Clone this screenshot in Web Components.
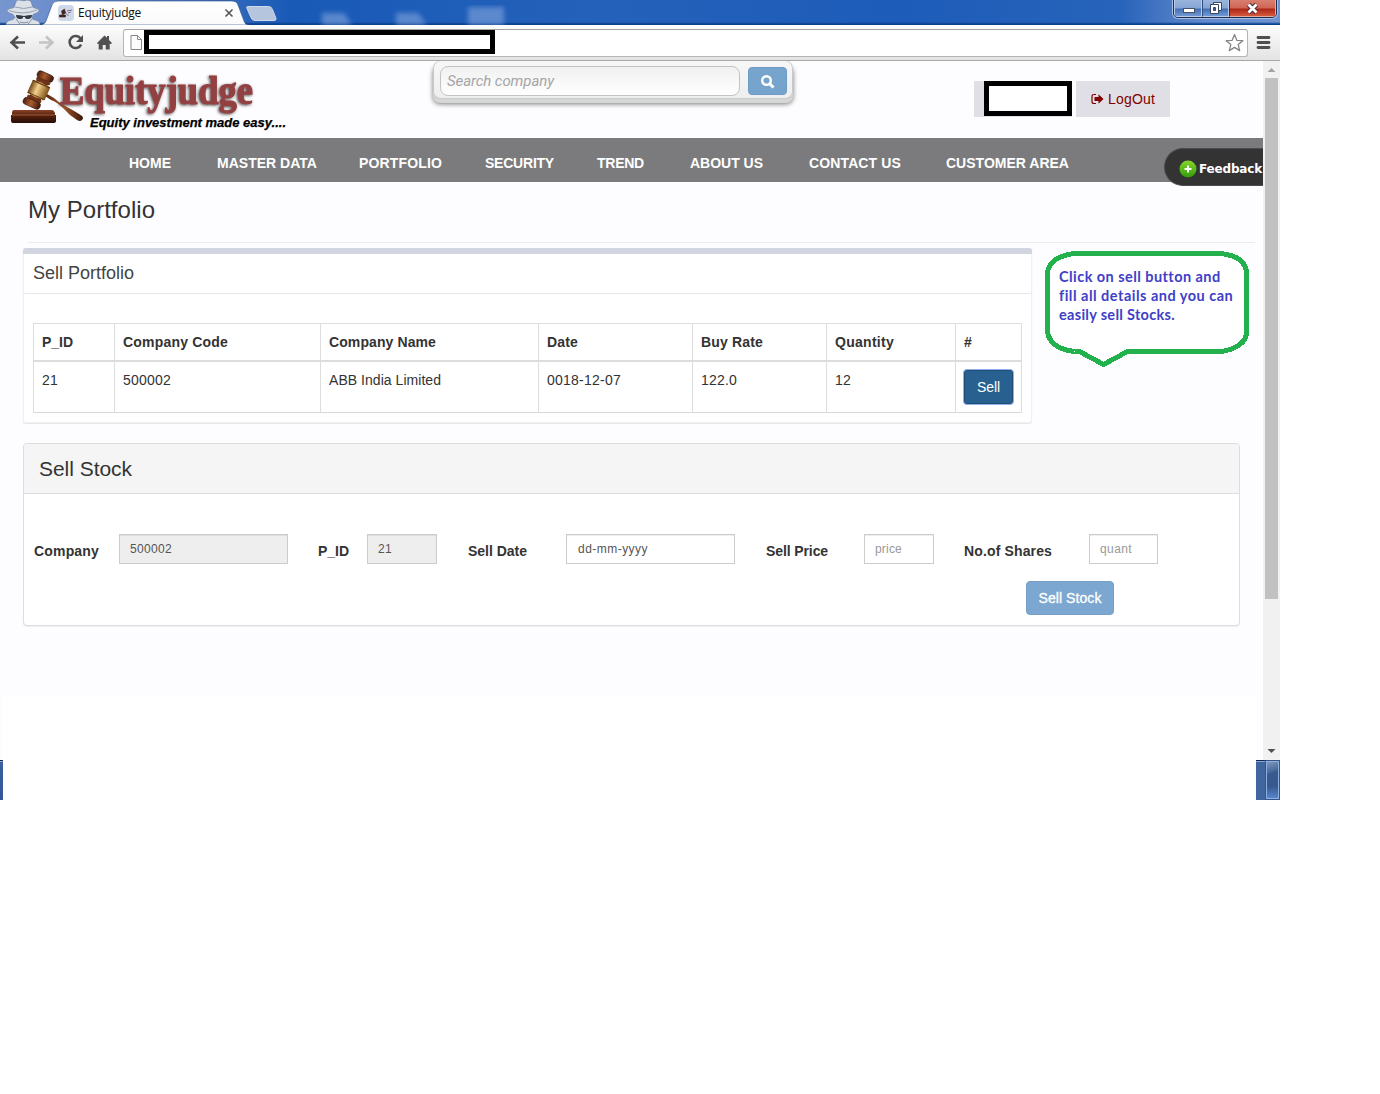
<!DOCTYPE html>
<html lang="en">
<head>
<meta charset="utf-8">
<title>Equityjudge</title>
<style>
html,body{margin:0;background:#fff}
body{font:14px/20px "Liberation Sans",Arial,sans-serif;color:#333}
</style>
</head>
<body>
<browser-window></browser-window>
<script>
const define=(name,html)=>customElements.define(name,class extends HTMLElement{
  connectedCallback(){
    if(this.shadowRoot)return;
    this.attachShadow({mode:'open'}).innerHTML='<style>*{box-sizing:border-box}:host{display:block;box-sizing:border-box}</style>'+(typeof html==='function'?html(this):html);
  }
});

/* Single-line text tracked out (or in) to the given width. */
customElements.define('fit-text',class extends HTMLElement{
  connectedCallback(){
    if(this.shadowRoot)return;
    const w=+this.getAttribute('w');
    this.attachShadow({mode:'open'}).innerHTML=`<style>:host{display:block;flex:none;white-space:nowrap;width:${w}px}span{display:inline-block}</style><span><slot></slot></span>`;
    queueMicrotask(()=>{
      const s=this.shadowRoot.querySelector('span');
      const n=this.textContent.length;
      s.style.letterSpacing=((w-s.getBoundingClientRect().width)/n).toFixed(3)+'px';
    });
  }
});

define('title-bar',`<style>
:host{height:25px;position:relative;overflow:hidden;background:linear-gradient(180deg,transparent 22px,#0c4190 24px,#0c4190),linear-gradient(90deg,#7796d0 0,#6f90cd 40px,#2e66bb 240px,#195ab7 290px,#2461ba 600px,#1d5cb9 900px,#2763ba 1120px,#6088cb 1200px,#6e93d0 1280px)}
svg{display:block}
.tabtext{position:absolute;left:78px;top:4px;font:12px/18px "Open Sans",sans-serif;color:#111}
.win{position:absolute;left:1173px;top:-4px;width:104px;height:22px;display:flex;border:1px solid #1d2e52;border-radius:0 0 5px 5px;overflow:hidden;box-shadow:0 0 0 1px #a9bfe4}
.win div{border:1px solid #b8cbe8;border-top:0;background:linear-gradient(#a2bbdf 0,#86a5d5 11px,#426eb3 12px,#7099d4);display:flex;align-items:center;justify-content:center;padding:3px 0 0 1px}
.win .a{width:28px}.win .b{width:27px;border-left-color:#2f4d80}.win .c{flex:1;background:linear-gradient(#dc8a7c 0,#cf6554 11px,#ad2615 12px,#d4593e);border-color:#e4a99f;border-left-color:#511e1b}
</style>
<svg width="1280" height="25" viewBox="0 0 1280 25">
<defs><filter id="b"><feGaussianBlur stdDeviation="2.400"/></filter><linearGradient id="t" x2="0" y2="1"><stop stop-color="#fff"/><stop offset="1" stop-color="#fafafa"/></linearGradient></defs>
<g fill="#6f96d4" opacity=".75" filter="url(#b)"><path d="M322 13h22l8 12h-30zM396 13h22l9 12h-31zM468 7h36v18h-36z"/></g>
<path d="M6 24.500q0-4 7-5l2-2-2-3q-6-2-6-4 1-2 7-3l2-6q1-2 4-1.500 4 1.500 7 0 3 0 4 1.500l2 6q6 1 6 3 0 2-6 4l-1 3 1 2q7 1 7 5z" fill="#dce1e7" stroke="#7588a4" stroke-width=".8"/>
<path d="M9 10.500q14 5 28-.5M15 7q9 3 17 0" stroke="#94a1b2" fill="none"/>
<path d="M16 15q4 0 8 1 4-1 8-1 0 4-4 4-3 0-3-2h-2q0 2-3 2-4 0-4-4z" fill="#333a46"/>
<path d="M16 19l4 5m12-5-4 5M20 22l4 1 4-1" stroke="#8390a1" fill="none"/>
<path d="M41 25q4-1 5-4l6-16q1-4 6-4h173q6 0 7 4l6 16q1 4 5 4z" fill="url(#t)" stroke="#365889" stroke-opacity=".65"/>
<path d="M247.500 6.500h21q3 0 4 3l3.500 9q.5 2-2 2h-19q-3 0-4-3l-4-9q-1-2 .5-2z" fill="#b6c5de" stroke="#d0d9e9"/>
<rect x="58" y="5" width="16" height="16" rx="4" fill="#cfd7eb"/>
<path d="M59.500 15h6v2h-6zM61.500 11l3-2 1 4-3 2zM64.500 12l4 4" stroke="#43241a" stroke-width=".6" fill="#43241a"/><path d="M67 11l5-1m-4 3 3-1" stroke="#7b7184"/>
<path d="M225.500 9.500l7 7m0-7-7 7" stroke="#555" stroke-width="1.600"/>
</svg>
<fit-text class="tabtext" w="63">Equityjudge</fit-text>
<div class="win"><div class="a"><svg width="14" height="12"><rect x="1.500" y="6.500" width="11" height="4" fill="#fff" stroke="#48536a"/></svg></div>
<div class="b"><svg width="14" height="14"><g fill="#fff" stroke="#3c485f"><path d="M4.500 1.500h8v8h-8z"/><path d="M1.500 3.500h8v9h-8z"/><path d="M4.500 6.500h2v3h-2z" fill="#3c5f9c"/></g></svg></div>
<div class="c"><svg width="14" height="13"><path d="M2.500 2.500l8 8m0-8-8 8" stroke="#4a282e" stroke-width="4.600"/><path d="M2.500 2.500l8 8m0-8-8 8" stroke="#fff" stroke-width="2.800"/></svg></div></div>`);

define('redacted-box',`<style>:host{background:#fff;border:5px solid #000;flex:none}</style>`);

define('tool-bar',`<style>
:host{height:36px;background:linear-gradient(#fdfdfd,#e3e3e3);border-bottom:1px solid #a8a8a8;display:flex}
svg{display:block;flex:none}
.omni{width:1125px;height:28px;margin-top:4px;border:1px solid #b5b5b5;border-top-color:#a3a3a3;border-radius:3px;background:#fff;display:flex;justify-content:space-between}
.l{display:flex}redacted-box{width:351px;height:24px}
</style>
<svg width="123" height="35" viewBox="0 25 123 35"><g fill="none" stroke-width="2.600">
<path d="M25 42.500H12m6-6-6.500 6 6.500 6" stroke="#505050"/>
<path d="M39 42.500h13m-6-6 6.500 6-6.500 6" stroke="#c4c4c4"/>
<path d="M80.500 38.500a6 6 0 1 0 .6 6" stroke="#505050"/></g><path d="M83 35v7h-7z" fill="#505050"/>
<path d="M97 43l7.500-7.500 2.500 2.300V36h2v4l3 3-1.300 1.300-1-.9V49.500h-4V45h-3v4.500h-4v-6l-.7.800z" fill="#505050"/></svg>
<div class="omni"><div class="l"><svg width="20" height="26" viewBox="124 30 20 26"><path d="M131 35.500h6.500l4 4v10h-10.500zM137.500 35.500v4h4" fill="#fcfcfc" stroke="#888"/></svg><redacted-box></redacted-box></div>
<svg width="24" height="26" viewBox="1223 30 24 26"><path d="M1234.500 34.500l2.300 5.800 6 .4-4.600 3.900 1.500 6-5.200-3.200-5.200 3.200 1.500-6-4.600-3.900 6-.4z" fill="#fff" stroke="#858585" stroke-width="1.300" stroke-linejoin="round"/></svg></div>
<svg width="32" height="35" viewBox="1248 25 32 35"><path d="M1258 37.500h11m-11 5h11m-11 5h11" stroke="#505050" stroke-width="2.800" stroke-linecap="round"/></svg>`);

define('site-logo',`<style>:host{width:290px;height:77px}svg{display:block;overflow:visible}</style>
<svg width="290" height="77" viewBox="0 61 290 77"><defs>
<linearGradient id="w" x2="0" y2="1"><stop stop-color="#8b4428"/><stop offset=".4" stop-color="#55200f"/><stop offset="1" stop-color="#290e07"/></linearGradient>
<linearGradient id="h"><stop stop-color="#4b1e0e"/><stop offset=".45" stop-color="#a95c2e"/><stop offset="1" stop-color="#3b160a"/></linearGradient>
<linearGradient id="g"><stop stop-color="#6f4412"/><stop offset=".4" stop-color="#f3d28c"/><stop offset="1" stop-color="#805015"/></linearGradient>
<filter id="s" x="-10%" y="-20%" width="120%" height="150%"><feDropShadow dx="-1" dy="1" stdDeviation="1.500" flood-color="#333" flood-opacity=".85"/></filter></defs>
<path d="M14 110h38q2 0 3 3v2h1v6q0 2-3 2H13q-2 0-2-2v-6h1v-2q0-3 2-3z" fill="url(#w)"/><path d="M12 115h43" stroke="#a35d37" fill="none"/>
<path d="M47 94l7 4q5 5 13 9 11 6 15 9 2 2 0 4t-5 0q-7-4-13-11-7-7-13-9l-6-4z" fill="url(#h)"/>
<g transform="translate(38.500 90.500) rotate(24)"><rect x="-6" y="-17" width="12" height="34" fill="url(#h)"/><rect x="-8" y="-19" width="17" height="7" rx="3" fill="url(#h)" stroke="#30140b" stroke-width=".6"/><rect x="-7" y="-12" width="15" height="3" rx="1" fill="#6d3217"/><rect x="-9.500" y="-8" width="19" height="15" rx="2" fill="url(#g)"/><path d="M-9.500-7h19M-9.500 6h19" stroke="#59330d"/><rect x="-8" y="8" width="15" height="3" fill="#6d3217"/><rect x="-10" y="11" width="18" height="7" rx="3" fill="url(#h)" stroke="#30140b" stroke-width=".6"/></g>
<text x="60" y="103.500" textLength="193" lengthAdjust="spacingAndGlyphs" font-family="Liberation Serif" font-weight="700" font-size="39" fill="#934142" stroke="#934142" stroke-width="1.100" filter="url(#s)">Equityjudge</text>
<text x="90" y="127" textLength="196" lengthAdjust="spacingAndGlyphs" font-family="Liberation Sans" font-weight="700" font-style="italic" font-size="13" fill="#000" stroke="#000" stroke-width=".25">Equity investment made easy....</text></svg>`);

define('search-box',`<style>
:host{width:360px;height:38px;padding:5px 6px 0 7px;display:flex;align-items:flex-start;justify-content:space-between;background:linear-gradient(#f7f7f7,#eee);border-radius:7px;border-bottom:1px solid #ccc;box-shadow:0 4px 0 #d5d6d6,0 5px 5px #777,inset 1px 0 #c8c8c8,inset -1px 0 #c8c8c8}
.in{width:300px;height:30px;border:1px solid #c4c4c4;border-radius:8px;background:linear-gradient(#f1f1f1,#fff);padding:0 6px;font:italic 15px/28px Roboto,sans-serif;color:#a5a5a5}
.go{width:39px;height:28px;margin-top:1px;border-radius:4px;border:1px solid #6c9bc6;background:#76a4cd;display:flex;align-items:center;justify-content:center}
</style><div class="in"><fit-text w="107">Search company</fit-text></div>
<div class="go"><svg width="15" height="15" viewBox="0 0 15 15"><circle cx="6.500" cy="6.500" r="4.300" fill="none" stroke="#fff" stroke-width="2.400"/><path d="M9.500 9.500l4 4" stroke="#fff" stroke-width="3"/></svg></div>`);

define('user-bar',`<style>
:host{width:196px;display:flex;gap:4px;color:#800000}
.u{width:98px;height:36px;background:#e0dfe5;padding-left:10px}redacted-box{width:88px;height:35px}
.o{width:94px;height:36px;background:#e0dfe5;display:flex;align-items:center;padding-left:15px;gap:4px}
</style><div class="u"><redacted-box></redacted-box></div><div class="o"><svg width="13" height="12" viewBox="0 0 13 12"><path d="M5 1.500H3Q1 1.500 1 3.500v5q0 2 2 2h2" fill="none" stroke="#800000" stroke-width="1.200"/><path d="M3.500 4H7.500V1.200l5 4.800-5 4.800V8H3.500z" fill="#800000"/></svg><fit-text w="47">LogOut</fit-text></div>`);

define('site-header',`<style>:host{height:77px;display:flex;align-items:flex-start}search-box{margin-left:143px}user-bar{margin:20px 0 0 181px}</style>
<site-logo></site-logo><search-box></search-box><user-bar></user-bar>`);

const nav=[['HOME',42,129],['MASTER DATA',100,46],['PORTFOLIO',83,42],['SECURITY',69,43],['TREND',47,43],['ABOUT US',73,46],['CONTACT US',92,46],['CUSTOMER AREA',123,45]];
define('feedback-tab',`<style>:host{width:99px;height:38px;border-radius:19px 0 0 19px;background:#333;border:1px solid #4b4b4d;border-right:0;display:flex;align-items:center;padding:3px 0 0 14px;gap:2px;color:#fff;font:bold 12px/18px "DejaVu Sans",sans-serif;overflow:hidden}svg{flex:none}</style>
<svg width="18" height="18"><defs><linearGradient id="g" x2="0" y2="1"><stop stop-color="#86d62c"/><stop offset="1" stop-color="#319c08"/></linearGradient></defs><circle cx="9" cy="9" r="8.500" fill="url(#g)"/><path d="M9 5.500v7M5.500 9h7" stroke="#fff" stroke-width="2"/></svg><fit-text w="63">Feedback</fit-text>`);
define('nav-bar',`<style>:host{height:44px;background:#7b7b7d;display:flex;position:relative;color:#fff;font-weight:700;padding-top:15px}feedback-tab{position:absolute;right:0;top:10px}</style>`
+nav.map(n=>`<fit-text w="${n[1]}" style="margin-left:${n[2]}px">${n[0]}</fit-text>`).join('')+'<feedback-tab></feedback-tab>');

const cols=[['P_ID',31,'21',16,81],['Company Code',105,'500002',48,206],['Company Name',107,'ABB India Limited',112,218],['Date',31,'0018-12-07',74,154],['Buy Rate',62,'122.0',36,134],['Quantity',59,'12',16,129],['#',8,'',0,66]];
define('holdings-table',`<style>
:host{width:989px;border:1px solid #ddd;border-bottom-color:#d8d8d8}
.r{display:flex;height:36px}.r>div{flex:none;padding:8px 0 0 8px;border-right:1px solid #ddd}.r>div:last-child{border-right:0}
.h{height:38px;font-weight:700;border-bottom:2px solid #ddd}.b{height:50px}
.btn{width:51px;height:36px;margin:-1px 0 0 -1px;background:#286090;border:1px solid #8fb0ec;border-radius:4px;box-shadow:inset 0 0 0 1px #204d74;color:#fff;display:flex;align-items:center;justify-content:center}
</style><div class="r h">${cols.map(c=>`<div style="width:${c[4]}px"><fit-text w="${c[1]}">${c[0]}</fit-text></div>`).join('')}</div>
<div class="r b">${cols.map(c=>`<div style="width:${c[4]}px">${c[2]?`<fit-text w="${c[3]}">${c[2]}</fit-text>`:'<div class="btn"><fit-text w="23">Sell</fit-text></div>'}</div>`).join('')}</div>`);

define('portfolio-panel',`<style>
:host{width:1009px;height:175px;background:#fff;border:1px solid #f0f0f2;border-top:0;border-radius:3px;box-shadow:0 1px 1px #e5e5e5}
.h{height:45px;margin:0 -1px;border-top:6px solid #d2d5df;border-radius:3px;box-shadow:0 1px 1px #e6e6e6;padding:9px 0 0 10px;font-size:18px;color:#444}
holdings-table{margin:30px 0 0 9px}
</style><div class="h"><fit-text w="101">Sell Portfolio</fit-text></div><holdings-table></holdings-table>`);

define('call-out',`<style>:host{width:204px;height:118px;display:grid;font:bold 14.500px/19px Lato,sans-serif;color:#4040c8}svg,.t{grid-area:1/1}.t{padding:17px 0 0 14px}</style>
<svg width="204" height="118" viewBox="1045 250 204 118"><path d="M1074 253.500h147q25 3 25.500 20v60q-2 14-25 18h-94l-24 13-24-13h-5q-25-3-27-20v-60q3-15 27-18z" fill="#fff" stroke="#22b14c" stroke-width="5" shape-rendering="crispEdges"/></svg>
<div class="t"><fit-text w="161">Click on sell button and</fit-text><fit-text w="174">fill all details and you can</fit-text><fit-text w="116">easily sell Stocks.</fit-text></div>`);

define('form-field',e=>`<style>
:host{display:flex;flex:none;color:#333}
.l{width:${e.getAttribute('gap')}px;font-weight:700;padding-top:7px}
.i{width:${e.getAttribute('size')}px;height:30px;border:1px solid #ccc;background:${e.hasAttribute('disabled')?'#eee':'#fff'};box-shadow:inset 0 1px 1px rgba(0,0,0,.075);color:${e.getAttribute('color')||'#555'};padding:0 0 0 ${e.getAttribute('inset')||10}px;font-size:12px;line-height:28px}
</style><div class="l"><fit-text w="${e.getAttribute('lw')}">${e.getAttribute('label')}</fit-text></div><div class="i"><fit-text w="${e.getAttribute('vw')}">${e.getAttribute('value')}</fit-text></div>`);

define('sell-panel',`<style>
:host{width:1217px;height:183px;border:1px solid #ddd;border-radius:4px;background:#fff;box-shadow:0 1px 1px rgba(0,0,0,.06)}
.h{height:50px;border-bottom:1px solid #ddd;background:#f5f5f5;padding:14px 15px;font-size:21px;line-height:22px;border-radius:3px 3px 0 0}
.f{display:flex;padding:40px 0 0 10px}
.btn{width:88px;height:34px;margin:17px 0 0 1002px;border:1px solid #739fc8;border-radius:4px;background:#7ba7d0;color:#fff;-webkit-text-stroke:.3px #fff;display:flex;align-items:center;justify-content:center}
</style><div class="h"><fit-text w="93">Sell Stock</fit-text></div>
<div class="f">
<form-field label="Company" lw="65" gap="85" size="169" value="500002" vw="42" disabled></form-field>
<form-field style="margin-left:30px" label="P_ID" lw="31" gap="49" size="70" value="21" vw="14" disabled></form-field>
<form-field style="margin-left:31px" label="Sell Date" lw="59" gap="98" size="169" value="dd-mm-yyyy" vw="70" inset="11"></form-field>
<form-field style="margin-left:31px" label="Sell Price" lw="62" gap="98" size="70" value="price" vw="27" color="#999"></form-field>
<form-field style="margin-left:30px" label="No.of Shares" lw="88" gap="125" size="69" value="quant" vw="32" color="#999"></form-field>
</div><div class="btn"><fit-text w="63">Sell Stock</fit-text></div>`);

define('page-body',`<style>
:host{height:578px}
h1{margin:0;padding:14px 0 0 28px;height:60px;font:24px/28px "Liberation Sans",sans-serif}
hr{margin:0 8px 0 28px;border:0;height:1px;background:#ececee}
.row{display:flex;align-items:flex-start;gap:13px;height:181px;padding:5px 0 0 23px}
call-out{margin-top:2px}sell-panel{margin:19px 0 0 23px}
.blank{height:64px;margin:70px 7px 0 3px;background:#fff}
</style><h1><fit-text w="127">My Portfolio</fit-text></h1><hr><div class="row"><portfolio-panel></portfolio-panel><call-out></call-out></div><sell-panel></sell-panel><div class="blank"></div>`);

define('scroll-bar',`<style>:host{width:17px;height:699px;background:#f1f1f1;display:flex;flex-direction:column;align-items:center}svg{display:block;flex:none}.t{width:13px;height:521px;background:#c1c1c1}.s{flex:1}</style>
<svg width="17" height="17"><path d="M4.500 11l4-4 4 4z" fill="#a3a3a3"/></svg><div class="t"></div><div class="s"></div><svg width="17" height="17"><path d="M4.500 6l4 4 4-4z" fill="#505050"/></svg>`);

define('task-bar',`<style>:host{height:40px;display:flex;justify-content:space-between}.l{width:3px;background:linear-gradient(#15294e 1px,#8ba8d6 1px,#8ba8d6 2px,#3c609e 2px,#34569a)}.r{width:24px;padding:1px 1px 1px 10px;background:linear-gradient(#15294e 1px,#8ba8d6 1px,#8ba8d6 2px,#41669f 2px)}.d{height:38px;border:1px solid #8fb0dd;outline:1px solid #33558c;background:linear-gradient(160deg,#8098b9 0,#45669a 11px,transparent 12px),linear-gradient(#3b5b8d,#37588f 24px,#5685cd)}</style>
<div class="l"></div><div class="r"><div class="d"></div></div>`);

define('browser-window',`<style>:host{width:1280px;height:800px}.v{display:flex;height:699px;background:#fdfdff}.p{width:1263px;overflow:hidden}</style>
<title-bar></title-bar><tool-bar></tool-bar><div class="v"><div class="p"><site-header></site-header><nav-bar></nav-bar><page-body></page-body></div><scroll-bar></scroll-bar></div><task-bar></task-bar>`);
</script>
</body>
</html>
